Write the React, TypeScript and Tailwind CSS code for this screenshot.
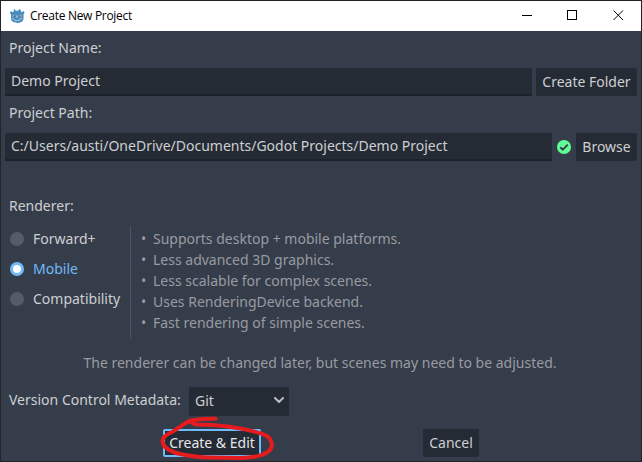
import React from "react";

function GodotIcon() {
  return (
    <svg width="16" height="16" viewBox="0 0 16 16" className="shrink-0">
      <path
        fill="#478cbf"
        d="M6 1.100 6.500 2.800h3l.5-1.700 2 .8-.2 1.800 1 .6 1.600-1.200 1.200 1.600-1.100 1.600V11c0 2.400-3 3.900-6 3.900S2 13.400 2 11V6.300L.9 4.700l1.200-1.600 1.600 1.200 1-.6-.2-1.800z"
      />
      <circle cx="4.800" cy="8" r="1.300" fill="#e3eef6" />
      <circle cx="11.200" cy="8" r="1.300" fill="#e3eef6" />
      <circle cx="5" cy="8.100" r=".9" fill="#414042" />
      <circle cx="11" cy="8.100" r=".9" fill="#414042" />
      <path d="M8 7.500v2" stroke="#e3eef6" />
      <path d="M2.300 10.700l3 .4.300 1.400h4.800l.3-1.400 3-.4" fill="none" stroke="#bcd6e8" strokeWidth=".7" />
    </svg>
  );
}

function TitleBar() {
  return (
    <header className="flex h-[30px] shrink-0 items-center bg-white pl-2 text-black">
      <GodotIcon />
      <span className="ml-[5px] font-['Open_Sans',sans-serif] text-[12px] tracking-[-0.3px]">Create New Project</span>
      <svg className="ml-auto" width="138" height="30" fill="none" stroke="#000" strokeWidth="1">
        <path d="M19 14.500h10" shapeRendering="crispEdges" />
        <rect x="64.500" y="9.500" width="9" height="9" shapeRendering="crispEdges" />
        <path d="M110.500 9.500l9.500 9.500M120 9.500l-9.500 9.500" />
      </svg>
    </header>
  );
}

function TextField({ value, width }: { value: string; width: string }) {
  return (
    <div className={`flex h-7 items-center rounded-t-[2px] border-b-2 border-[#1d2229] bg-[#252b34] pl-[6px] ${width}`}>
      {value}
    </div>
  );
}

function Button({ label, className }: { label: string; className: string }) {
  return (
    <button className={`flex h-7 items-center justify-center rounded-[2px] bg-[#252b34] ${className}`}>{label}</button>
  );
}

function Radio({ label, selected = false }: { label: string; selected?: boolean }) {
  return (
    <div className={`flex h-[30px] items-center ${selected ? "text-[#70bafa]" : ""}`}>
      <span
        className={`mr-[9px] size-[14px] shrink-0 rounded-full ${
          selected ? "border-[3px] border-[#70bafa] bg-white" : "bg-[#565c67]"
        }`}
      />
      {label}
    </div>
  );
}

const features = [
  "Supports desktop + mobile platforms.",
  "Less advanced 3D graphics.",
  "Less scalable for complex scenes.",
  "Uses RenderingDevice backend.",
  "Fast rendering of simple scenes.",
];

export default function App() {
  return (
    <div className="relative flex h-[462px] w-[642px] flex-col overflow-hidden whitespace-nowrap border border-[#25232a] bg-[#363d4a] font-['Noto_Sans',sans-serif] text-[14px] leading-5 text-[#cdcfd2]">
      <TitleBar />
      <main className="flex min-h-0 flex-1 flex-col px-1">
        <div className="mt-[7px] pl-1">Project Name:</div>
        <div className="mt-[10px] flex gap-1">
          <TextField value="Demo Project" width="w-[527px]" />
          <Button label="Create Folder" className="w-[101px]" />
        </div>
        <div className="mt-[7px] pl-1">Project Path:</div>
        <div className="mt-[10px] flex items-center">
          <TextField value="C:/Users/austi/OneDrive/Documents/Godot Projects/Demo Project" width="w-[547px]" />
          <svg className="mx-[5px]" width="14" height="14" viewBox="0 0 14 14">
            <circle cx="7" cy="7" r="7" fill="#5fff97" />
            <path d="M3.300 7.200l2.500 2.400 5-5" fill="none" stroke="#363d4a" strokeWidth="2" />
          </svg>
          <Button label="Browse" className="w-[61px]" />
        </div>

        <div className="mt-[35px] pl-1">Renderer:</div>
        <div className="mt-[10px] flex h-[113px] pl-[5px]">
          <div className="-mt-[2px] w-[120px]">
            <Radio label="Forward+" />
            <Radio label="Mobile" selected />
            <Radio label="Compatibility" />
          </div>
          <ul className="border-l border-[#4d535e] pl-[10px] pt-[2px] text-[#989ba1]">
            {features.map((feature) => (
              <li key={feature} className="flex h-[21px] items-center">
                <span className="w-[12px]">•</span>
                {feature}
              </li>
            ))}
          </ul>
        </div>
        <div className="mt-[14px] pr-[2px] text-center text-[#989ba1]">
          The renderer can be changed later, but scenes may need to be adjusted.
        </div>

        <div className="mt-[14px] flex h-[29px] pl-1">
          <span className="mt-[3px] w-[180px]">Version Control Metadata:</span>
          <div className="flex h-[29px] w-[100px] items-center justify-between rounded-[2px] bg-[#252b34] pb-[2px] pl-[6px] pr-[5px]">
            Git
            <svg width="10" height="7" viewBox="0 0 10 7" fill="none" stroke="#b9bcc0" strokeWidth="2" strokeLinecap="round" strokeLinejoin="round">
              <path d="M1 1l4 4 4-4" />
            </svg>
          </div>
        </div>
        <div className="mt-[13px] flex pl-[158px]">
          <Button label="Create & Edit" className="w-[98px] border-2 border-[#70bafa] text-[#e5e6e8]" />
          <Button label="Cancel" className="ml-[162px] w-[56px]" />
        </div>
      </main>

      <svg className="pointer-events-none absolute -left-px -top-px" width="642" height="462" fill="none">
        <path
          d="M215.500 418.800C208 418.500 199 418.800 191 420.500C184 423 178 429 172 432C165 435 161 439 163 443C164 448 172 452 180 454C190 456 200 457.500 210 457.500L240 458C253 458 264 455 269 451C274 447 272 439 266 435.500C254 430 240 428.500 227 426.500C213 424.500 202 424.500 196 424.500Q193 424 191.500 422"
          stroke="#e51b1d"
          strokeWidth="4"
          strokeLinecap="round"
          strokeLinejoin="round"
        />
      </svg>
    </div>
  );
}
